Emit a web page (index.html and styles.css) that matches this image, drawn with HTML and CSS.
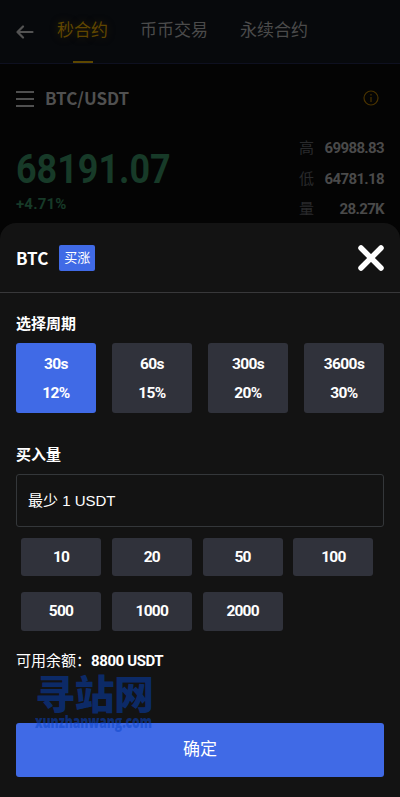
FILE: index.html
```html
<!DOCTYPE html>
<html lang="zh-CN">
<head>
<meta charset="utf-8">
<title>BTC/USDT</title>
<link rel="stylesheet" href="styles.css">
</head>
<body>
<div class="app">
  <header class="nav">
    <svg class="back" width="18" height="14" viewBox="0 0 18 14"><path d="M7 1.5 1.5 7 7 12.5M2 7h14.5"/></svg>
    <nav class="tabs"><span class="tab active">秒合约</span><span class="tab">币币交易</span><span class="tab">永续合约</span></nav>
  </header>
  <div class="pair">
    <svg class="menu" width="18" height="16" viewBox="0 0 18 16"><path d="M0 1h18M0 8h18M0 15h18"/></svg>
    <b class="pair-name">BTC/USDT</b>
    <svg class="info" width="16" height="16" viewBox="0 0 16 16"><circle cx="8" cy="8" r="7"/><path d="M8 7v5M8 4v1.4"/></svg>
  </div>
  <section class="quote">
    <div class="last">
      <div class="price"><span>68191.07</span></div>
      <div class="change">+4.71%</div>
    </div>
    <div class="stats">
      <div class="stat"><span>高</span><b>69988.83</b></div>
      <div class="stat"><span>低</span><b>64781.18</b></div>
      <div class="stat"><span>量</span><b>28.27K</b></div>
    </div>
  </section>
  <section class="sheet">
    <div class="sheet-head">
      <b class="coin">BTC</b><span class="tag">买涨</span>
      <svg class="close" width="26" height="26" viewBox="0 0 26 26"><path d="M3 3 23 23M23 3 3 23"/></svg>
    </div>
    <div class="sheet-body">
      <h2>选择周期</h2>
      <div class="periods">
        <div class="period selected"><span>30s</span><span>12%</span></div>
        <div class="period"><span>60s</span><span>15%</span></div>
        <div class="period"><span>300s</span><span>20%</span></div>
        <div class="period"><span>3600s</span><span>30%</span></div>
      </div>
      <h2 class="buy-title">买入量</h2>
      <div class="field">最少 1 USDT</div>
      <div class="amounts">
        <div>10</div><div>20</div><div>50</div><div>100</div>
        <div>500</div><div>1000</div><div>2000</div>
      </div>
      <div class="balance"><span>可用余额：</span><b>8800 USDT</b></div>
      <div class="confirm">确定</div>
    </div>
    <div class="mark"><div class="mark-name">寻站网</div><div class="mark-url"><span>xunzhanwang.com</span></div></div>
  </section>
</div>
</body>
</html>
```
FILE: styles.css
```css
* { box-sizing: border-box; }
body { margin: 0; background: #040404; font-family: Roboto, "Noto Sans CJK SC", sans-serif; }
.app { position: relative; width: 400px; height: 797px; overflow: hidden; background: #040404; }
.nav { display: flex; align-items: center; height: 64px; padding: 0 16px; background: #07090c; border-bottom: 1px solid #0e1020; }
.back { fill: none; stroke: #535353; stroke-width: 2.2; stroke-linecap: round; stroke-linejoin: round; }
.tabs { display: flex; gap: 32px; height: 63px; margin-left: 23px; }
.tab { font: 17px/58px "Noto Sans CJK SC", sans-serif; color: #4b4b4b; white-space: nowrap; }
.active { color: #604600; text-shadow: 0 0 8px rgba(96, 70, 0, .4); display: flex; flex-direction: column; align-items: center; }
.active::after { content: ""; width: 20px; height: 2px; margin-top: 3px; background: #5d4700; }
.pair { display: flex; align-items: center; height: 69px; padding: 0 21px 0 16px; }
.menu { stroke: #505050; stroke-width: 2; }
.pair-name { margin: -1px 0 0 11px; font: bold 17px/26px "Noto Sans CJK SC", sans-serif; color: #505050; }
.info { margin: -1px 0 0 auto; fill: none; stroke: #4a3300; stroke-width: 1.2; }
.quote { display: flex; justify-content: space-between; padding: 0 16px; }
.last { color: #173a28; font-weight: bold; padding-top: 11px; }
.price { width: 154px; height: 49px; font-size: 41.5px; line-height: 49px; }
.price span { display: inline-block; transform: scaleX(.865); transform-origin: left; }
.change { font-size: 15px; line-height: 22px; letter-spacing: .2px; }
.stats { width: 85px; margin-top: -1px; }
.stat { display: flex; justify-content: space-between; height: 30.5px; line-height: 30px; font-size: 15px; }
.stat span { color: #292a2c; font-family: "Noto Sans CJK SC", sans-serif; }
.stat b { color: #4a4a4a; letter-spacing: -.65px; padding-top: 1px; }
.sheet { position: absolute; left: 0; right: 0; top: 223px; bottom: 0; background: #131313; border-radius: 16px 16px 0 0; color: #fff; }
.sheet-head { display: flex; align-items: center; height: 70px; padding: 0 16px; border-bottom: 1px solid #38383a; }
.coin { font: bold 17px/26px "Noto Sans CJK SC", sans-serif; }
.tag { width: 36px; height: 26px; margin-left: 11px; border-radius: 2px; background: #406ae6; font: 13px/24px "Noto Sans CJK SC", sans-serif; text-align: center; }
.close { margin-left: auto; fill: none; stroke: #fff; stroke-width: 5.5; stroke-linecap: round; }
.sheet-body { padding: 19px 16px 0; }
h2 { margin: 0; height: 31px; font: bold 15px/22px "Noto Sans CJK SC", sans-serif; }
.periods { display: grid; grid-template-columns: repeat(4, 80px); gap: 16px; }
.period { display: flex; flex-direction: column; height: 70px; padding-top: 7px; border-radius: 3px; background: #30323b; font-size: 15.5px; font-weight: bold; line-height: 29px; text-align: center; letter-spacing: -.6px; }
.selected { background: #406ae6; }
.buy-title { margin-top: 30px; }
.field { height: 53px; padding-left: 11px; border: 1px solid #34373a; border-radius: 3px; font: 15px/51px "Liberation Sans", "Noto Sans CJK SC", sans-serif; }
.amounts { display: grid; grid-template-columns: repeat(4, 80px); grid-template-rows: 38px 39px; gap: 16px 10.8px; margin: 11px 0 0 5px; }
.amounts div { border-radius: 3px; background: #30323b; font-size: 15.5px; font-weight: bold; line-height: 39px; text-align: center; letter-spacing: -.8px; }
.balance { display: flex; height: 22px; margin-top: 18px; font-size: 15px; line-height: 22px; white-space: nowrap; }
.balance span { width: 75px; font-family: "Noto Sans CJK SC", sans-serif; }
.balance b { letter-spacing: -.4px; padding-top: 1px; }
.confirm { height: 54px; margin-top: 52px; border-radius: 3px; background: #406ae6; font: 17px/50px "Noto Sans CJK SC", sans-serif; text-align: center; }
.mark { position: absolute; left: 35px; top: 448px; width: 120px; color: rgba(8, 60, 170, .58); }
.mark-name { font: 900 40px/42px "Noto Sans CJK SC", sans-serif; white-space: nowrap; letter-spacing: -.5px; }
.mark-url { width: 118px; font: 800 17px/17px "Open Sans", sans-serif; color: rgba(8, 67, 200, .5); }
.mark-url span { display: inline-block; transform: scaleX(.72); transform-origin: left; letter-spacing: -.2px; }
```
